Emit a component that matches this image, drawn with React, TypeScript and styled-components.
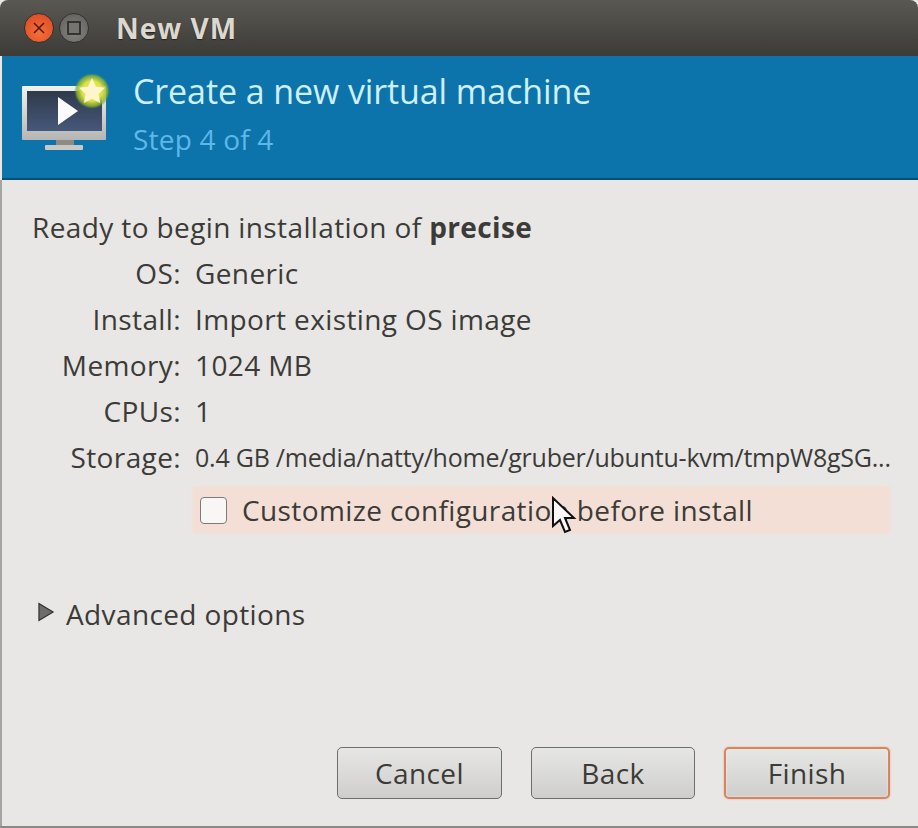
import React from "react";
import styled, { createGlobalStyle } from "styled-components";

const Global = createGlobalStyle`
  html, body { margin: 0; padding: 0; background: #e8e7e5; }
  body { font-family: "Open Sans", "Noto Sans", sans-serif; }
`;
const Window = styled.div`
  width: 918px; height: 828px; box-sizing: border-box; display: flex; flex-direction: column;
  overflow: hidden; background: #e8e7e5; border-bottom: 2px solid #8a8986;
`;
const TitleBar = styled.div`
  height: 56px; flex: none; display: flex; align-items: center; padding: 0 0 0 24px; gap: 5px;
  box-sizing: border-box; border-radius: 8px 8px 0 0;
  background: linear-gradient(#5a5853, #3d3b37);
`;
const WinButton = styled.div<{ $close?: boolean }>`
  width: 30px; height: 30px; border-radius: 50%; flex: none; display: flex; align-items: center; justify-content: center;
  box-sizing: border-box;
  background: ${p => p.$close ? "radial-gradient(circle at 50% 65%, #f4703a, #d9451f)" : "radial-gradient(circle at 50% 65%, #85837e, #5f5d59)"};
  border: 1px solid #33312e;
`;
const WinTitle = styled.div`
  margin-left: 22px; font: 700 28px/1 "Open Sans", sans-serif; color: #dcd8d0; text-shadow: 0 1px 1px #222; letter-spacing: 1px;
`;
const Banner = styled.div`
  height: 124px; flex: none; box-sizing: border-box; margin-left: 2px; display: flex; align-items: flex-start;
  background: #0d73ab; border-bottom: 2px solid #0b4e74; padding: 12px 0 0 18px;
`;
const BannerText = styled.div`display: flex; flex-direction: column; margin-left: 21px;`;
const BannerTitle = styled.div`font: 400 34px/46px "Open Sans", sans-serif; color: #cdf0f7; letter-spacing: -.1px;`;
const BannerStep = styled.div`font: 400 28px/36px "Open Sans", sans-serif; color: #5db8e8; margin-top: 7px; letter-spacing: .2px;`;
const Body = styled.div`
  flex: 1; display: flex; flex-direction: column; padding: 24px 28px 27px 28px; min-height: 0;
  border-left: 2px solid #a5a4a1; color: #3c3b37; letter-spacing: .38px; font: 400 28px/46px "Open Sans", sans-serif;
`;
const Summary = styled.div`
  display: grid; grid-template-columns: 151px 1fr; column-gap: 14px;
`;
const Heading = styled.div`grid-column: 1 / 3; white-space: nowrap; padding-left: 2px; b { font-weight: 700; }`;
const Label = styled.div`text-align: right; white-space: nowrap;`;
const Value = styled.div<{ $small?: boolean }>`
  white-space: nowrap;
  font-size: ${p => p.$small ? 25 : 28}px;
  letter-spacing: ${p => p.$small ? "-.23px" : ".38px"};
`;
const CheckRow = styled.div`
  position: relative; display: flex; align-items: center; height: 46px; margin: 7px 0 0 163px; padding-left: 7px;
  background: #f4dfd6; box-shadow: 0 0 4px #f4dfd6;
`;
const CheckBox = styled.div`
  width: 27px; height: 27px; box-sizing: border-box; border-radius: 4px; background: #f8f7f6; border: 1.5px solid #7d7b78; flex: none;
`;
const CheckText = styled.div`margin-left: 15px; white-space: nowrap;`;
const Cursor = styled.svg`position: absolute; left: 358px; top: 9px;`;
const Expander = styled.div`display: flex; align-items: center; margin-top: 58px; margin-left: 8px; gap: 11px;`;
const Arrow = styled.svg`margin-top: -4px; flex: none;`;
const Spacer = styled.div`flex: 1;`;
const Buttons = styled.div`display: flex; justify-content: flex-end; gap: 29px;`;
const Button = styled.div<{ $focus?: boolean; $w: number }>`
  width: ${p => p.$w}px; height: 52px; box-sizing: border-box; display: flex; align-items: center; justify-content: center;
  border-radius: 5px; border: ${p => p.$focus ? "2px solid #d8845f" : "1.5px solid #6f6e6b"};
  box-shadow: ${p => p.$focus ? "0 0 2px #e9a184" : "none"}, inset 0 0 2px #f2f2f0;
  background: linear-gradient(#e6e6e4, #cfcecc); font-size: 28px; line-height: 1; color: #3c3b37;
`;

export default function App() {
  return (
    <Window>
      <Global />
      <TitleBar>
        <WinButton $close>
          <svg width="16" height="16" viewBox="0 0 16 16"><path d="M3 3l10 10M13 3L3 13" stroke="#5a1a0a" strokeWidth="1.6" /></svg>
        </WinButton>
        <WinButton>
          <svg width="16" height="16" viewBox="0 0 16 16"><rect x="2" y="2" width="12" height="12" fill="#76746f" stroke="#2f2e2b" strokeWidth="1.8" /></svg>
        </WinButton>
        <WinTitle>New VM</WinTitle>
      </TitleBar>
      <Banner>
        <svg width="92" height="84" viewBox="0 0 92 84" style={{ flex: "none" }}>
          <defs>
            <radialGradient id="glow">
              <stop offset="55%" stopColor="#dfe24a" />
              <stop offset="85%" stopColor="#8fb52e" stopOpacity=".8" />
              <stop offset="100%" stopColor="#3f8f6a" stopOpacity="0" />
            </radialGradient>
            <linearGradient id="screen" x1="0" y1="0" x2="0" y2="1">
              <stop offset="0" stopColor="#2f3a4a" />
              <stop offset="1" stopColor="#46587a" />
            </linearGradient>
            <linearGradient id="bezel" x1="0" y1="0" x2="0" y2="1">
              <stop offset="0" stopColor="#f2f2f0" />
              <stop offset="1" stopColor="#b5b5b3" />
            </linearGradient>
          </defs>
          <rect x="2" y="18" width="84" height="54" rx="1" fill="url(#bezel)" />
          <rect x="7" y="23" width="75" height="40" fill="url(#screen)" />
          <path d="M38 29v28l20-14z" fill="#fbfbfb" />
          <rect x="36" y="72" width="18" height="5" fill="#8f8a84" />
          <rect x="25" y="77" width="38" height="5" rx="1" fill="#c8c8c6" />
          <circle cx="72" cy="23" r="18" fill="url(#glow)" />
          <path d="M72 10l4 8.500 9 1.200-6.500 6.300 1.600 9-8.100-4.300-8.100 4.300 1.600-9-6.500-6.300 9-1.200z" fill="#fdf6cc" />
        </svg>
        <BannerText>
          <BannerTitle>Create a new virtual machine</BannerTitle>
          <BannerStep>Step 4 of 4</BannerStep>
        </BannerText>
      </Banner>
      <Body>
        <Summary>
          <Heading>Ready to begin installation of <b>precise</b></Heading>
          <Label>OS:</Label><Value>Generic</Value>
          <Label>Install:</Label><Value>Import existing OS image</Value>
          <Label>Memory:</Label><Value>1024 MB</Value>
          <Label>CPUs:</Label><Value>1</Value>
          <Label>Storage:</Label><Value $small>0.4 GB /media/natty/home/gruber/ubuntu-kvm/tmpW8gSG...</Value>
        </Summary>
        <CheckRow>
          <CheckBox />
          <CheckText>Customize configuration before install</CheckText>
          <Cursor width="26" height="38" viewBox="0 0 26 38">
            <path d="M2 2v28l7-6 5 12 5-2-5-12h9z" fill="#fafafa" stroke="#111" strokeWidth="2" />
          </Cursor>
        </CheckRow>
        <Expander>
          <Arrow width="17" height="20" viewBox="0 0 18 20"><path d="M1 1l15 9-15 9z" fill="#6d6c69" stroke="#2f2e2b" strokeWidth="1.2" /></Arrow>
          <span>Advanced options</span>
        </Expander>
        <Spacer />
        <Buttons>
          <Button $w={165}>Cancel</Button>
          <Button $w={164}>Back</Button>
          <Button $w={166} $focus>Finish</Button>
        </Buttons>
      </Body>
    </Window>
  );
}
